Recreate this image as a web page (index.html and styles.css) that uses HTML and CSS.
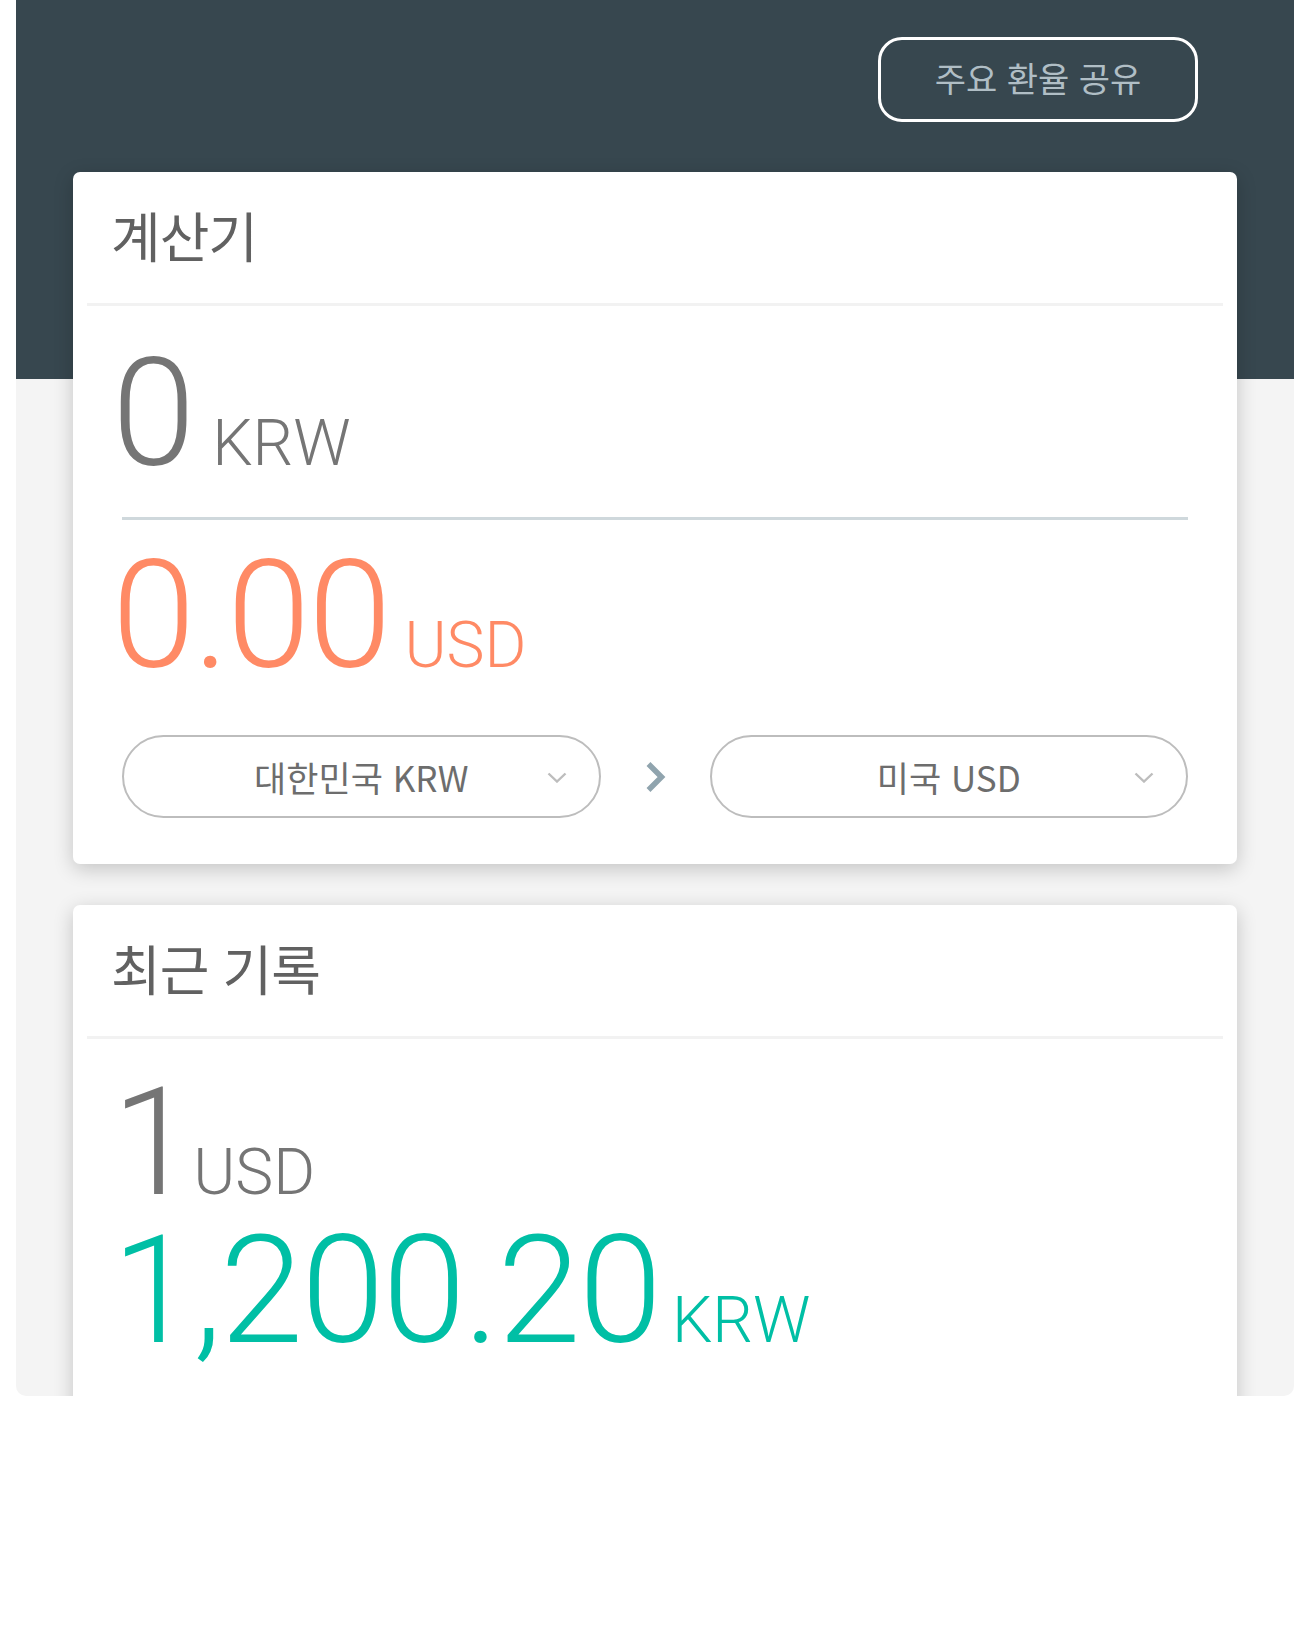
FILE: index.html
```html
<!DOCTYPE html>
<html lang="ko">
<head>
<meta charset="utf-8">
<title>환율 계산기</title>
<link rel="stylesheet" href="styles.css">
</head>
<body>
<div class="app">
  <header class="topbar">
    <button class="share-btn" type="button">주요 환율 공유</button>
  </header>
  <main class="content">
    <section class="card">
      <div class="card-head"><h2 class="card-title">계산기</h2></div>
      <div class="calc-body">
        <div class="amount amount-input"><span class="num">0</span><span class="unit unit-krw">KRW</span></div>
        <div class="underline"></div>
        <div class="amount amount-result"><span class="num">0.00</span><span class="unit unit-usd">USD</span></div>
        <div class="selectors">
          <div class="select">대한민국 KRW
            <svg class="caret" viewBox="0 0 20 11" width="20" height="11"><polyline points="1.5,1.5 10,9.5 18.5,1.5" fill="none" stroke="#bdbdbd" stroke-width="2.4"/></svg>
          </div>
          <div class="swap">
            <svg viewBox="0 0 21 30" width="21" height="30"><polyline points="3.5,2 16.5,15 3.5,28" fill="none" stroke="#90a4ae" stroke-width="5.5"/></svg>
          </div>
          <div class="select">미국 USD
            <svg class="caret" viewBox="0 0 20 11" width="20" height="11"><polyline points="1.5,1.5 10,9.5 18.5,1.5" fill="none" stroke="#bdbdbd" stroke-width="2.4"/></svg>
          </div>
        </div>
      </div>
    </section>
    <section class="card">
      <div class="card-head"><h2 class="card-title">최근 기록</h2></div>
      <div class="history-body">
        <div class="amount history-from"><span class="num">1</span><span class="unit unit-tight">USD</span></div>
        <div class="amount history-to"><span class="num">1,200.20</span><span class="unit unit-hist">KRW</span></div>
      </div>
    </section>
  </main>
</div>
</body>
</html>
```
FILE: styles.css
```css
html, body {
  margin: 0;
  padding: 0;
  background: #ffffff;
}

.app {
  width: 1278px;
  height: 1396px;
  margin-left: 16px;
  background: #f4f4f4;
  border-radius: 0 0 10px 10px;
  overflow: hidden;
}

.topbar {
  height: 379px;
  box-sizing: border-box;
  background: #37474f;
  display: flex;
  justify-content: flex-end;
  align-items: flex-start;
  padding: 37px 96px 0 0;
}

.share-btn {
  width: 320px;
  height: 85px;
  box-sizing: border-box;
  border: 3px solid #ffffff;
  border-radius: 24px;
  background: transparent;
  color: #b0bec5;
  font: 400 34px/1 "Noto Sans CJK KR", sans-serif;
  padding: 0 0 3px;
}

.content {
  margin-top: -207px;
  padding: 0 57px;
  display: flex;
  flex-direction: column;
  gap: 41px;
}

.card {
  background: #ffffff;
  border-radius: 7px;
  box-shadow: 0 5px 20px rgba(0, 0, 0, 0.2);
}

.card-head {
  height: 131px;
  margin: 0 14px;
  border-bottom: 3px solid #f2f2f2;
  display: flex;
  align-items: center;
  padding-left: 24px;
}

.card-title {
  margin: 0;
  padding-bottom: 6px;
  font: 400 54px/1 "Noto Sans CJK KR", sans-serif;
  letter-spacing: -1px;
  color: #616161;
}

.calc-body {
  padding: 33px 49px 46px;
}

.amount {
  display: flex;
  align-items: baseline;
  margin-left: -10px;
}

.num {
  font: 300 150px/150px Roboto, sans-serif;
  letter-spacing: -2px;
}

.unit {
  font: 300 64px/1 Roboto, sans-serif;
}

.unit-krw {
  margin-left: 19px;
}

.unit-usd {
  margin-left: 15px;
}

.unit-tight {
  margin-left: 0;
}

.unit-hist {
  margin-left: 12px;
}

.amount-input {
  color: #757575;
}

.underline {
  height: 3px;
  background: #cfd8dc;
  margin-top: 28px;
}

.amount-result {
  color: #ff8a65;
  margin-top: 21px;
}

.selectors {
  display: grid;
  grid-template-columns: 1fr 109px 1fr;
  align-items: center;
  margin-top: 44px;
}

.select {
  position: relative;
  height: 83px;
  box-sizing: border-box;
  border: 2px solid #bdbdbd;
  border-radius: 42px;
  display: flex;
  align-items: center;
  justify-content: center;
  font: 400 35px/1 "Noto Sans CJK KR", sans-serif;
  color: #6d6d6d;
}

.caret {
  position: absolute;
  right: 32px;
  top: 50%;
  margin-top: -5px;
}

.swap {
  display: flex;
  justify-content: center;
}

.swap svg {
  display: block;
}

.history-body {
  padding: 31px 0 200px 39px;
}

.history-body .amount {
  margin-left: 0;
}

.history-from {
  color: #757575;
}

.history-from .num {
  line-height: 146px;
}

.history-to {
  color: #00bfa5;
}
```
